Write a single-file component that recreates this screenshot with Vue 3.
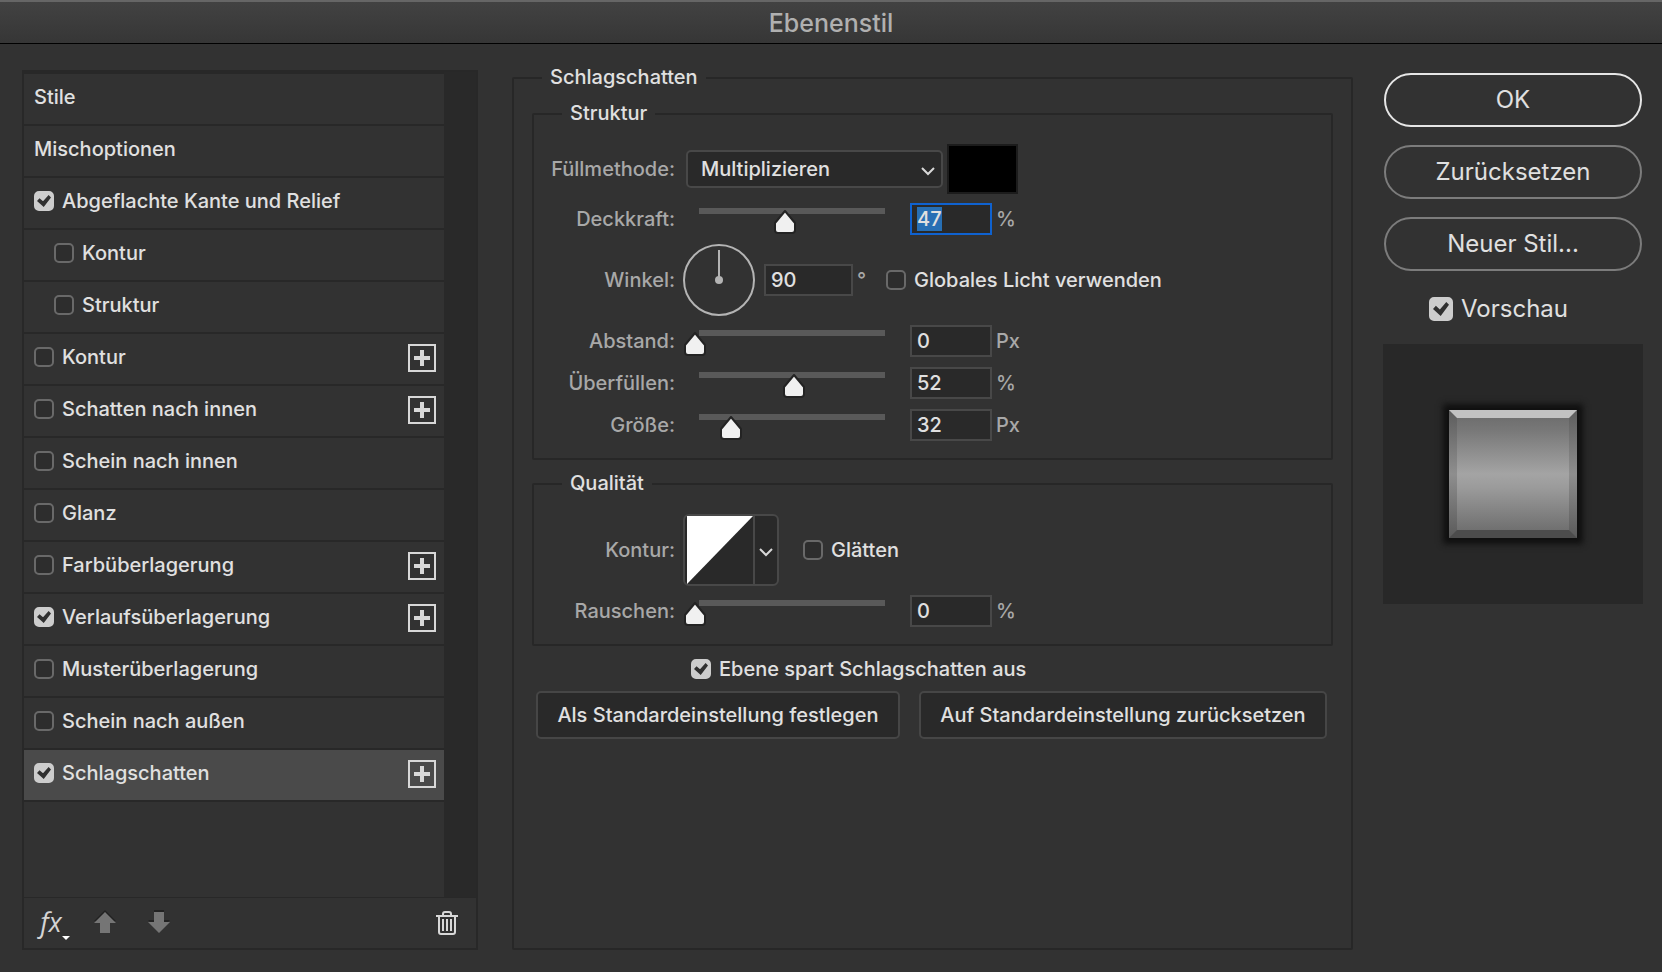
<script setup>
import { nextTick, onMounted, reactive, ref } from 'vue'

const effects = reactive([
  { id: 'bevel', label: 'Abgeflachte Kante und Relief', on: true },
  { id: 'bevel-contour', label: 'Kontur', on: false, sub: true },
  { id: 'bevel-texture', label: 'Struktur', on: false, sub: true },
  { id: 'stroke', label: 'Kontur', on: false, add: true },
  { id: 'inner-shadow', label: 'Schatten nach innen', on: false, add: true },
  { id: 'inner-glow', label: 'Schein nach innen', on: false },
  { id: 'satin', label: 'Glanz', on: false },
  { id: 'color-overlay', label: 'Farbüberlagerung', on: false, add: true },
  { id: 'gradient-overlay', label: 'Verlaufsüberlagerung', on: true, add: true },
  { id: 'pattern-overlay', label: 'Musterüberlagerung', on: false },
  { id: 'outer-glow', label: 'Schein nach außen', on: false },
  { id: 'drop-shadow', label: 'Schlagschatten', on: true, add: true },
])
const selected = ref('drop-shadow')

const opacity = ref(47)
const angle = ref(90)
const sizes = reactive([
  { id: 'distance', label: 'Abstand:', value: 0, max: 100, unit: 'Px' },
  { id: 'spread', label: 'Überfüllen:', value: 52, max: 100, unit: '%' },
  { id: 'size', label: 'Größe:', value: 32, max: 170, unit: 'Px' },
])
const noise = ref(0)
const globalLight = ref(false)
const antiAliased = ref(false)
const knockout = ref(true)
const preview = ref(true)
const blendMode = ref('Multiplizieren')

const opacityField = ref(null)
onMounted(async () => {
  await nextTick()
  opacityField.value.focus()
  opacityField.value.select()
})
</script>

<template>
  <div class="dialog">
    <header class="titlebar"><h1>Ebenenstil</h1></header>

    <main class="content">
      <section class="styles" aria-label="Stile">
        <div class="list-wrap">
          <ul class="list">
            <li class="row"><button type="button" class="plain">Stile</button></li>
            <li class="row"><button type="button" class="plain">Mischoptionen</button></li>
            <li
              v-for="e in effects"
              :key="e.id"
              class="row"
              :class="{ sub: e.sub, selected: e.id === selected }"
              @click="selected = e.id"
            >
              <input :id="e.id" v-model="e.on" type="checkbox" class="check" />
              <label :for="e.id">{{ e.label }}</label>
              <button v-if="e.add" type="button" class="add" :aria-label="e.label + ' hinzufügen'">
                <svg width="16" height="16" viewBox="0 0 16 16"><path d="M8 0v16M0 8h16" stroke="#d8d8d8" stroke-width="4" /></svg>
              </button>
            </li>
          </ul>
          <div class="gutter"></div>
        </div>
        <div class="tools">
          <button type="button" class="tool fx" aria-label="Effekte">
            <span>fx</span>
            <svg width="8" height="4" viewBox="0 0 8 4"><path d="M0 0h8L4 4z" fill="#fff" /></svg>
          </button>
          <button type="button" class="tool up" aria-label="Nach oben">
            <svg width="22" height="24" viewBox="0 0 22 24">
              <path d="M11 0L22 11H16V22H6V11H0z" fill="#222" />
              <path d="M11 2L22 13H16V23H6V13H0z" fill="#757575" />
            </svg>
          </button>
          <button type="button" class="tool down" aria-label="Nach unten">
            <svg width="22" height="24" viewBox="0 0 22 24">
              <path d="M6 0H16V10H22L11 21L0 10H6z" fill="#222" />
              <path d="M6 2H16V12H22L11 23L0 12H6z" fill="#757575" />
            </svg>
          </button>
          <button type="button" class="tool trash" aria-label="Löschen">
            <svg width="22" height="24" viewBox="0 0 22 24" fill="none" stroke="#d8d8d8" stroke-width="2">
              <path d="M0 5H22M7 5V3Q7 1 9 1H13Q15 1 15 3V5M3 5V21Q3 23 5 23H17Q19 23 19 21V5M7 8V20M11 8V20M15 8V20" />
            </svg>
          </button>
        </div>
      </section>

      <fieldset class="settings">
        <legend>Schlagschatten</legend>

        <fieldset class="group">
          <legend>Struktur</legend>
          <div class="line">
            <label class="name" for="blend">Füllmethode:</label>
            <span class="select">
              <select id="blend" v-model="blendMode">
                <option>Multiplizieren</option>
                <option>Normal</option>
              </select>
              <svg width="14" height="9" viewBox="0 0 14 9"><path d="M1 1l6 6 6-6" fill="none" stroke="#d8d8d8" stroke-width="2" /></svg>
            </span>
            <button type="button" class="swatch" aria-label="Schattenfarbe"></button>
          </div>
          <div class="line">
            <label class="name" for="opacity">Deckkraft:</label>
            <input v-model.number="opacity" type="range" class="slider" min="0" max="100" aria-label="Deckkraft" />
            <input id="opacity" ref="opacityField" v-model="opacity" type="text" class="field" />
            <span class="unit">%</span>
          </div>
          <div class="line">
            <label class="name" for="angle">Winkel:</label>
            <svg class="dial" width="72" height="72" viewBox="0 0 72 72">
              <circle cx="36" cy="36" r="35" fill="none" stroke="#b4b4b4" stroke-width="2" />
              <path d="M36 6V36" stroke="#b4b4b4" stroke-width="2" />
              <circle cx="36" cy="36" r="4" fill="#b4b4b4" />
            </svg>
            <input id="angle" v-model="angle" type="text" class="field wide" />
            <span class="unit degree">°</span>
            <input id="global" v-model="globalLight" type="checkbox" class="check" />
            <label for="global">Globales Licht verwenden</label>
          </div>
          <div class="stack">
            <div v-for="s in sizes" :key="s.id" class="line">
              <label class="name" :for="s.id">{{ s.label }}</label>
              <input v-model.number="s.value" type="range" class="slider" min="0" :max="s.max" :aria-label="s.label" />
              <input :id="s.id" v-model="s.value" type="text" class="field" />
              <span class="unit">{{ s.unit }}</span>
            </div>
          </div>
        </fieldset>

        <fieldset class="group">
          <legend>Qualität</legend>
          <div class="line">
            <label class="name" for="contour">Kontur:</label>
            <button id="contour" type="button" class="contour">
              <svg class="curve" width="66" height="68" viewBox="0 0 66 68"><path d="M0 0H66L0 68z" fill="#fff" /></svg>
              <span class="arrow">
                <svg width="14" height="9" viewBox="0 0 14 9"><path d="M1 1l6 6 6-6" fill="none" stroke="#d8d8d8" stroke-width="2" /></svg>
              </span>
            </button>
            <input id="smooth" v-model="antiAliased" type="checkbox" class="check" />
            <label for="smooth">Glätten</label>
          </div>
          <div class="line">
            <label class="name" for="noise">Rauschen:</label>
            <input v-model.number="noise" type="range" class="slider" min="0" max="100" aria-label="Rauschen" />
            <input id="noise" v-model="noise" type="text" class="field" />
            <span class="unit">%</span>
          </div>
        </fieldset>

        <div class="knockout">
          <input id="knockout" v-model="knockout" type="checkbox" class="check" />
          <label for="knockout">Ebene spart Schlagschatten aus</label>
        </div>
        <div class="defaults">
          <button type="button">Als Standardeinstellung festlegen</button>
          <button type="button">Auf Standardeinstellung zurücksetzen</button>
        </div>
      </fieldset>

      <aside class="actions">
        <button type="button" class="pill primary">OK</button>
        <button type="button" class="pill">Zurücksetzen</button>
        <button type="button" class="pill">Neuer Stil...</button>
        <div class="preview-toggle">
          <input id="preview" v-model="preview" type="checkbox" class="check large" />
          <label for="preview">Vorschau</label>
        </div>
        <div class="preview">
          <svg v-if="preview" class="sample" width="128" height="128" viewBox="0 0 128 128">
            <defs>
              <linearGradient id="face" x1="0" y1="0" x2="0" y2="1">
                <stop offset="0" stop-color="#6f6f6f" />
                <stop offset="0.1" stop-color="#777" />
                <stop offset="0.5" stop-color="#a4a4a4" />
                <stop offset="0.62" stop-color="#9b9b9b" />
                <stop offset="1" stop-color="#707070" />
              </linearGradient>
              <linearGradient id="side" x1="0" y1="0" x2="0" y2="1">
                <stop offset="0" stop-color="#5c5c5c" />
                <stop offset="0.5" stop-color="#8e8e8e" />
                <stop offset="1" stop-color="#5a5a5a" />
              </linearGradient>
            </defs>
            <path d="M0 0H128V128H0z" fill="url(#side)" />
            <path d="M0 0H128L120 8H8z" fill="#c2c2c2" />
            <path d="M0 128H128L120 120H8z" fill="#4c4c4c" />
            <path d="M8 8H120V120H8z" fill="url(#face)" />
          </svg>
        </div>
      </aside>
    </main>
  </div>
</template>

<style>
html,
body {
  background: #323232;
}
</style>

<style scoped>
.dialog,
.dialog *,
.dialog *::before {
  box-sizing: border-box;
}
.dialog {
  display: flex;
  flex-direction: column;
  min-height: 100vh;
  background: #323232;
  color: #e0e0e0;
  font-family: Inter, "Liberation Sans", sans-serif;
  font-size: 20px;
  font-weight: 500;
  line-height: 24px;
}
button,
input,
select {
  margin: 0;
  font: inherit;
  color: inherit;
}
button {
  padding: 0;
  border: 0;
  background: none;
}
svg {
  display: block;
  flex: none;
}
label {
  white-space: nowrap;
}
.titlebar {
  display: flex;
  align-items: center;
  justify-content: center;
  height: 44px;
  border-top: 2px solid #666;
  border-bottom: 1px solid #000;
  background: linear-gradient(#424242, #363636);
}
h1 {
  margin: 0;
  font-size: 25px;
  line-height: 30px;
  font-weight: 500;
  color: #b0b0b0;
}
.content {
  flex: 1;
  display: flex;
  padding: 22px 19px 22px 22px;
}

/* effect list */
.styles {
  flex: none;
  display: flex;
  flex-direction: column;
  width: 456px;
  margin-top: 4px;
  border: 2px solid #282828;
}
.list-wrap {
  flex: 1;
  display: flex;
}
.list {
  flex: 1;
  margin: 0;
  padding: 0;
  list-style: none;
  border-top: 2px solid #282828;
}
.row {
  display: flex;
  align-items: center;
  gap: 8px;
  height: 52px;
  padding: 0 8px 4px 10px;
  border-bottom: 2px solid #282828;
}
.row.sub {
  padding-left: 30px;
}
.row.selected {
  background: #4a4a4a;
}
.plain {
  flex: 1;
  text-align: left;
}
.add {
  display: grid;
  place-items: center;
  width: 28px;
  height: 28px;
  margin: 2px 0 0 auto;
  border: 2px solid #d8d8d8;
}
.gutter {
  width: 32px;
  background: #292929;
}
.tools {
  display: flex;
  align-items: center;
  height: 51px;
  padding: 0 18px 0 16px;
  border-top: 1px solid #282828;
}
.fx {
  display: flex;
  align-items: flex-end;
  width: 32px;
}
.fx span {
  width: 22px;
  padding-bottom: 2px;
  font-family: "Open Sans", "Noto Sans", sans-serif;
  font-style: italic;
  font-size: 27px;
  font-weight: 400;
  line-height: 32px;
  color: #d4d4d4;
}
.up,
.down {
  padding-bottom: 2px;
}
.up {
  margin-left: 22px;
}
.down {
  margin-left: 32px;
}
.trash {
  margin-left: auto;
}

/* tick boxes */
.check {
  appearance: none;
  flex: none;
  display: grid;
  place-items: center;
  width: 20px;
  height: 20px;
  border: 2px solid #696969;
  border-radius: 5px;
  background: #2d2d2d;
}
.check:checked {
  border-color: #cdcdcd;
  background: #cdcdcd;
}
.check:checked::before {
  content: "";
  width: 14px;
  height: 12px;
  background: #303030;
  clip-path: polygon(0 50%, 18% 27%, 43% 53%, 83% 0, 100% 20%, 48% 100%);
}
.check.large {
  width: 24px;
  height: 24px;
}
.check.large:checked::before {
  width: 16px;
  height: 14px;
}

/* settings */
fieldset {
  min-width: 0;
  margin: 0;
  border: 2px solid #272727;
  border-radius: 2px;
}
legend {
  height: 24px;
  padding: 0 8px;
  line-height: 22px;
}
.settings {
  flex: 1;
  margin: 0 30px 0 34px;
  padding: 12px 18px 0;
}
.settings > legend {
  margin-left: 10px;
}
.group {
  display: flex;
  flex-direction: column;
  gap: 9px;
  padding: 18px 0 17px;
}
.group + .group {
  margin-top: 12px;
}
.group legend {
  margin-left: 28px;
}
.stack {
  display: flex;
  flex-direction: column;
  gap: 10px;
}
.line {
  display: flex;
  align-items: center;
}
.name {
  width: 149px;
  padding-right: 8px;
  text-align: right;
  color: #a8a8a8;
}
.select {
  position: relative;
  width: 257px;
  height: 38px;
  margin-left: 3px;
}
.select select {
  appearance: none;
  width: 100%;
  height: 100%;
  padding: 0 32px 0 13px;
  border: 2px solid #484848;
  border-radius: 5px;
  background: #292929;
  outline: none;
}
.select svg {
  position: absolute;
  right: 8px;
  top: 17px;
  pointer-events: none;
}
.swatch {
  width: 71px;
  height: 50px;
  margin-left: 4px;
  border: 2px solid #1c1c1c;
  background: #000;
}
.slider {
  appearance: none;
  width: 215px;
  height: 32px;
  margin: 0 12px 0 0;
  background: none;
  outline: none;
}
.slider::-webkit-slider-runnable-track {
  height: 32px;
  background: linear-gradient(#595959, #595959) no-repeat 16px 5px / calc(100% - 29px) 6px;
}
.slider::-webkit-slider-thumb {
  appearance: none;
  width: 24px;
  height: 25px;
  margin-top: 7px;
  background: url("data:image/svg+xml,%3Csvg xmlns='http://www.w3.org/2000/svg' width='24' height='25' viewBox='0 0 24 25'%3E%3Cpath d='M12 1L22 13V20Q22 23 19 23H5Q2 23 2 20V13z' fill='%23f0f0f0' stroke='%23232323' stroke-width='2' stroke-linejoin='round'/%3E%3C/svg%3E") no-repeat;
}
.field {
  width: 82px;
  height: 32px;
  padding: 0 5px;
  border: 2px solid #484848;
  border-radius: 0;
  background: #292929;
  outline: none;
}
.field:focus {
  border-color: #0f62d0;
}
.field::selection {
  background: #276fb4;
  color: #e0e0e0;
}
.field.wide {
  width: 89px;
}
.unit {
  margin-left: 4px;
  color: #a8a8a8;
}
.degree {
  width: 29px;
}
.dial {
  margin-right: 9px;
}
.check + label {
  margin-left: 8px;
}
.row .check + label {
  margin-left: 0;
}
.contour {
  display: flex;
  width: 96px;
  height: 72px;
  margin-right: 24px;
  padding-left: 2px;
  border: 2px solid #484848;
  border-radius: 6px;
  background: #292929;
}
.arrow {
  flex: 1;
  display: grid;
  place-items: center;
  height: 100%;
  padding-top: 4px;
  border-left: 2px solid #484848;
}
.knockout {
  display: flex;
  align-items: center;
  margin: 11px 0 10px 159px;
}
.defaults {
  display: flex;
  gap: 19px;
  margin: 0 6px 0 4px;
}
.defaults button {
  flex: 1 1 auto;
  height: 48px;
  border: 2px solid #464646;
  border-radius: 5px;
  background: #292929;
  white-space: nowrap;
}

/* actions */
.actions {
  flex: none;
  display: flex;
  flex-direction: column;
  width: 260px;
  padding-top: 7px;
  font-size: 24px;
  font-weight: 400;
  line-height: 28px;
}
.pill {
  height: 54px;
  margin: 0 1px 18px;
  border: 2px solid #7c7c7c;
  border-radius: 27px;
}
.primary {
  border-color: #e6e6e6;
}
.preview-toggle {
  display: flex;
  align-items: center;
  height: 28px;
  margin: 6px 0 21px 46px;
}
.preview {
  display: grid;
  place-items: center;
  height: 260px;
  background: #282828;
}
.sample {
  box-shadow: 0 0 6px 6px #101010;
}
</style>
